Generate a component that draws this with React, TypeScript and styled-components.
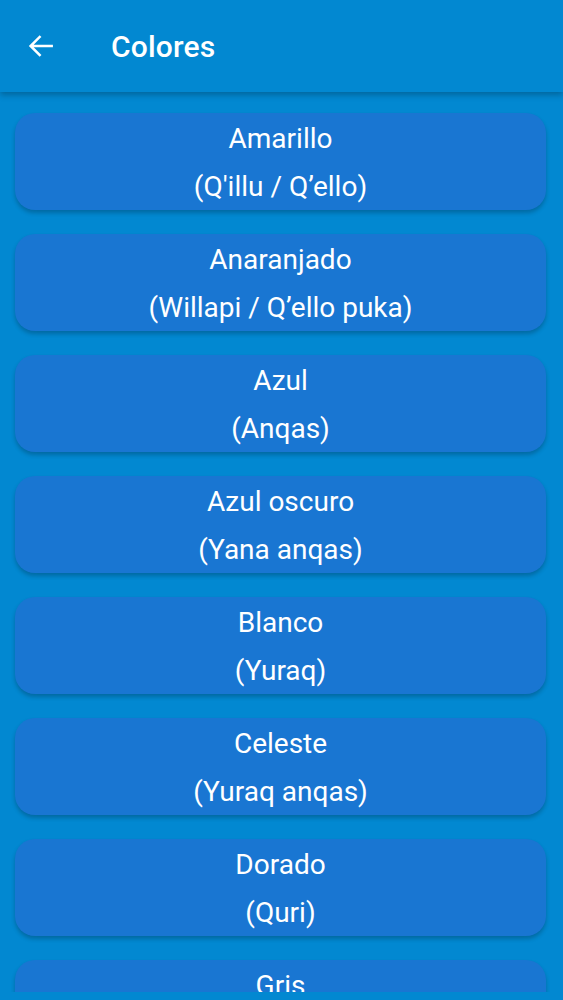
import React from 'react';
import styled, { createGlobalStyle } from 'styled-components';

const colors = [
  { es: 'Amarillo', qu: "(Q'illu / Q’ello)" },
  { es: 'Anaranjado', qu: '(Willapi / Q’ello puka)' },
  { es: 'Azul', qu: '(Anqas)' },
  { es: 'Azul oscuro', qu: '(Yana anqas)' },
  { es: 'Blanco', qu: '(Yuraq)' },
  { es: 'Celeste', qu: '(Yuraq anqas)' },
  { es: 'Dorado', qu: '(Quri)' },
  { es: 'Gris', qu: '(Uqi)' },
];

const GlobalStyle = createGlobalStyle`
  *, *::before, *::after {
    box-sizing: border-box;
  }
  html, body {
    margin: 0;
    padding: 0;
    background-color: #0288d1;
    font-family: Roboto, "Noto Sans", sans-serif;
  }
`;

const Screen = styled.div`
  width: 563px;
  height: 1000px;
  display: flex;
  flex-direction: column;
  background-color: #0288d1;
  overflow: hidden;
`;

const Header = styled.header`
  height: 92px;
  flex-shrink: 0;
  display: flex;
  align-items: center;
  padding-left: 25px;
  gap: 54px;
  background-color: #0288d1;
  box-shadow: 0 3px 6px rgb(0 0 0 / 0.25);
  position: relative;
  z-index: 2;
`;

const BackButton = styled.button`
  border: none;
  background: none;
  padding: 0;
  width: 32px;
  height: 32px;
  display: flex;
  align-items: center;
  justify-content: center;
  color: white;
`;

const Title = styled.h1`
  margin: 0;
  color: white;
  font-size: 30px;
  font-weight: 500;
  letter-spacing: 0.2px;
`;

const List = styled.div`
  height: 900px;
  flex-shrink: 0;
  overflow: hidden;
  display: flex;
  flex-direction: column;
  gap: 24px;
  padding: 21px 17px 0 15px;
`;

const Card = styled.div`
  flex-shrink: 0;
  height: 97px;
  padding-top: 3px;
  border-radius: 20px;
  background-color: #1976d2;
  box-shadow: 0 3px 4px rgb(0 0 0 / 0.22);
  display: flex;
  flex-direction: column;
  align-items: center;
  justify-content: center;
  color: white;
  font-size: 28px;
  line-height: 48px;
`;

const ArrowIcon = () => (
  <svg width="32" height="32" viewBox="0 0 24 24" fill="none" stroke="white" strokeWidth="1.9" strokeLinecap="square">
    <path d="M20 12H4.8M11 5.2L4.2 12 11 18.8" />
  </svg>
);

export default function App() {
  return (
    <Screen>
      <GlobalStyle />
      <Header>
        <BackButton aria-label="Volver">
          <ArrowIcon />
        </BackButton>
        <Title>Colores</Title>
      </Header>
      <List>
        {colors.map((c) => (
          <Card key={c.es}>
            <span>{c.es}</span>
            <span>{c.qu}</span>
          </Card>
        ))}
      </List>
    </Screen>
  );
}
